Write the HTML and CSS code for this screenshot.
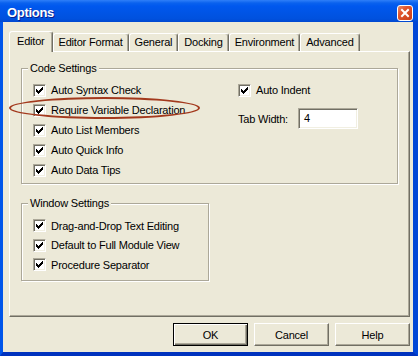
FILE: index.html
```html
<!DOCTYPE html>
<html>
<head>
<meta charset="utf-8">
<title>Options</title>
<link rel="stylesheet" href="styles.css">
</head>
<body>
<svg class="defs" width="0" height="0" aria-hidden="true">
  <defs>
    <symbol id="ck" viewBox="0 0 11 11">
      <path d="M2 4h1v3H2zM3 5h1v3H3zM4 6h1v3H4zM5 5h1v3H5zM6 4h1v3H6zM7 3h1v3H7zM8 2h1v3H8z" fill="#000"/>
    </symbol>
  </defs>
</svg>
<div class="window">
  <div class="titlebar">
    <span class="title">Options</span>
    <span class="close"><svg width="14" height="14" viewBox="0 0 14 14"><path d="M4 4L10 10M10 4L4 10" stroke="#fff" stroke-width="2" stroke-linecap="square"/></svg></span>
  </div>
  <div class="client">
    <div class="tabs">
      <div class="tab sel">Editor</div>
      <div class="tab">Editor Format</div>
      <div class="tab">General</div>
      <div class="tab">Docking</div>
      <div class="tab">Environment</div>
      <div class="tab">Advanced</div>
    </div>
    <div class="panel">
      <div class="group code">
        <div class="glabel">Code Settings</div>
        <div class="cols">
          <div class="col left">
            <div class="row"><span class="box"><svg width="11" height="11"><use href="#ck"/></svg></span>Auto Syntax Check</div>
            <div class="row"><span class="box"><svg width="11" height="11"><use href="#ck"/></svg></span>Require Variable Declaration</div>
            <div class="row"><span class="box"><svg width="11" height="11"><use href="#ck"/></svg></span>Auto List Members</div>
            <div class="row"><span class="box"><svg width="11" height="11"><use href="#ck"/></svg></span>Auto Quick Info</div>
            <div class="row"><span class="box"><svg width="11" height="11"><use href="#ck"/></svg></span>Auto Data Tips</div>
          </div>
          <div class="col right">
            <div class="row"><span class="box"><svg width="11" height="11"><use href="#ck"/></svg></span>Auto Indent</div>
            <div class="tabwidth"><span class="twlabel">Tab Width:</span><span class="input">4</span></div>
          </div>
        </div>
      </div>
      <div class="group win">
        <div class="glabel">Window Settings</div>
        <div class="cols">
          <div class="col">
            <div class="row r2"><span class="box"><svg width="11" height="11"><use href="#ck"/></svg></span>Drag-and-Drop Text Editing</div>
            <div class="row r2"><span class="box"><svg width="11" height="11"><use href="#ck"/></svg></span>Default to Full Module View</div>
            <div class="row r2"><span class="box"><svg width="11" height="11"><use href="#ck"/></svg></span>Procedure Separator</div>
          </div>
        </div>
      </div>
    </div>
    <div class="buttons">
      <div class="btn def">OK</div>
      <div class="btn">Cancel</div>
      <div class="btn">Help</div>
    </div>
  </div>
  <div class="ellipse"></div>
</div>
</body>
</html>
```
FILE: styles.css
```css
* { box-sizing: border-box; }
html, body { margin: 0; padding: 0; }
body {
  width: 418px;
  height: 356px;
  overflow: hidden;
  font-family: "Liberation Sans", Arial, sans-serif;
  font-size: 11px;
  letter-spacing: -0.2px;
  color: #000;
  background: #ECE9D8;
}
.defs { position: absolute; width: 0; height: 0; }
.window {
  position: relative;
  width: 418px;
  height: 356px;
  display: flex;
  flex-direction: column;
}
.titlebar {
  height: 22px;
  flex: none;
  display: flex;
  justify-content: space-between;
  align-items: flex-start;
  padding: 0 5px 0 7px;
  background: linear-gradient(to bottom, #2F7FF8 0, #0A62EE 3px, #0058EE 6px, #0055E6 55%, #0051DE 85%, #0148D0 100%);
}
.title {
  color: #fff;
  font-weight: bold;
  font-size: 13px;
  line-height: 13px;
  margin-top: 6px;
  letter-spacing: -0.3px;
  text-shadow: 1px 1px 0 #0A1E8C;
}
.close {
  width: 16px;
  height: 16px;
  margin-top: 5px;
  border: 1px solid #fff;
  border-radius: 3px;
  background: linear-gradient(135deg, #E98B6A 0, #E0562F 35%, #C93D17 100%);
  display: flex;
  align-items: center;
  justify-content: center;
}
.client {
  flex: 1;
  display: flex;
  flex-direction: column;
  background: #ECE9D8;
  border-left: 3px solid #0055EA;
  border-right: 5px solid #0046D6;
  border-bottom: 4px solid #0032BE;
  padding: 9px 3px 0 6px;
}
.tabs {
  display: flex;
  align-items: flex-end;
  height: 20px;
  position: relative;
  z-index: 1;
}
.tab {
  height: 18px;
  padding: 0 5px;
  line-height: 17px;
  white-space: nowrap;
  background: #ECE9D8;
  border-top: 1px solid #fff;
  border-left: 1px solid #fff;
  border-right: 1px solid #716F64;
  box-shadow: inset -1px 0 0 #ACA899;
  border-radius: 3px 3px 0 0;
}
.tab.sel {
  height: 21px;
  margin-bottom: -1px;
  padding: 0 7px;
  line-height: 19px;
}
.panel {
  height: 266px;
  flex: none;
  border: 1px solid;
  border-color: #fff #716F64 #716F64 #fff;
  box-shadow: inset -1px -1px 0 #ACA899;
  padding: 16px 0 0 11px;
}
.group {
  border: 1px solid #ACA899;
  box-shadow: 1px 1px 0 #fff, inset 1px 1px 0 #fff;
}
.group.code { width: 377px; height: 116px; }
.group.win { width: 188px; height: 78px; margin-top: 19px; }
.glabel {
  display: table;
  margin: -7px 0 0 6px;
  padding: 0 2px;
  line-height: 13px;
  background: #ECE9D8;
}
.cols {
  display: flex;
  padding: 5px 0 0 11px;
}
.win .cols { padding-top: 6px; }
.col.left { width: 205px; }
.row {
  height: 20px;
  display: flex;
  align-items: center;
  white-space: nowrap;
}
.row.r2 { height: 19.5px; }
.box {
  width: 13px;
  height: 13px;
  flex: none;
  margin-right: 5px;
  background: #fff;
  border: 1px solid;
  border-color: #ACA899 #fff #fff #ACA899;
  box-shadow: inset 1px 1px 0 #716F64, inset -1px -1px 0 #F1EFE2;
}
.box svg { display: block; }
.tabwidth {
  display: flex;
  align-items: center;
  margin-top: 8px;
}
.twlabel { width: 60px; }
.input {
  width: 60px;
  height: 21px;
  background: #fff;
  border: 1px solid;
  border-color: #ACA899 #fff #fff #ACA899;
  box-shadow: inset 1px 1px 0 #716F64, inset -1px -1px 0 #F1EFE2;
  padding-left: 5px;
  line-height: 19px;
}
.buttons {
  display: flex;
  justify-content: flex-end;
  gap: 6px;
  margin-top: 6px;
}
.btn {
  width: 75px;
  height: 23px;
  display: flex;
  align-items: center;
  justify-content: center;
  background: #ECE9D8;
  border: 1px solid;
  border-color: #fff #716F64 #716F64 #fff;
  box-shadow: inset -1px -1px 0 #ACA899;
}
.btn.def {
  border-color: #000;
  box-shadow: inset 1px 1px 0 #fff, inset -1px -1px 0 #716F64, inset -2px -2px 0 #ACA899;
}
.ellipse {
  position: absolute;
  left: 9px;
  top: 97px;
  width: 191px;
  height: 22px;
  border: 2px solid #A3391D;
  border-radius: 50%;
}
```
